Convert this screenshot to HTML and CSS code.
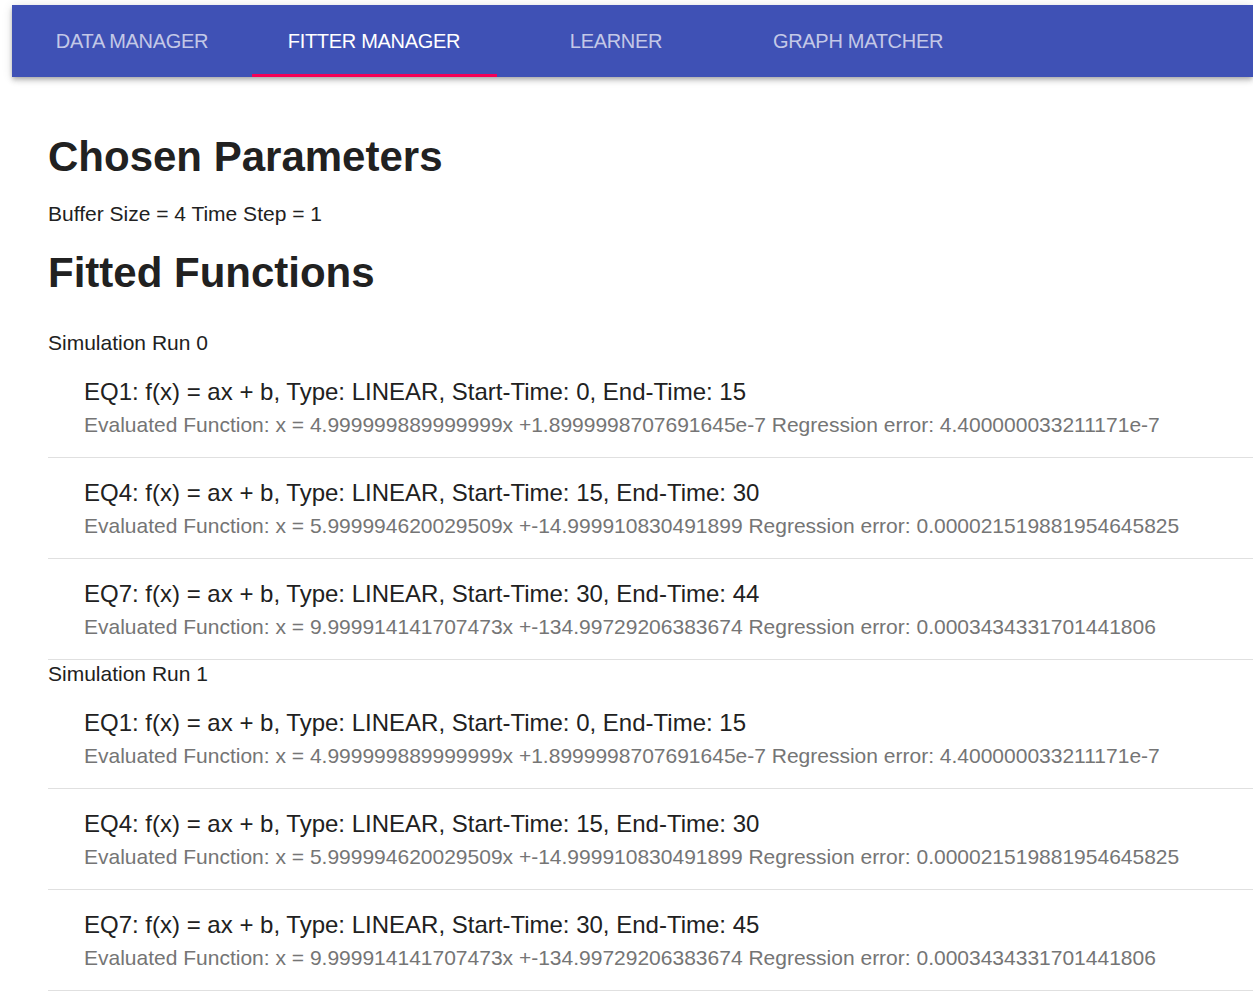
FILE: index.html
```html
<!DOCTYPE html>
<html>
<head>
<meta charset="utf-8">
<title>Fitter Manager</title>
<link rel="stylesheet" href="styles.css">
</head>
<body>
<header class="appbar">
  <nav class="tabs">
    <div class="tab">DATA MANAGER</div>
    <div class="tab tab-active">FITTER MANAGER</div>
    <div class="tab">LEARNER</div>
    <div class="tab">GRAPH MATCHER</div>
  </nav>
</header>
<main class="content">
  <h1 class="title title-first">Chosen Parameters</h1>
  <p class="params">Buffer Size = 4 Time Step = 1</p>
  <h1 class="title title-second">Fitted Functions</h1>

  <section class="run">
    <div class="run-label">Simulation Run 0</div>
    <ul class="list">
      <li class="item">
        <div class="primary">EQ1: f(x) = ax + b, Type: LINEAR, Start-Time: 0, End-Time: 15</div>
        <div class="secondary">Evaluated Function: x = 4.999999889999999x +1.8999998707691645e-7 Regression error: 4.400000033211171e-7</div>
      </li>
      <li class="item">
        <div class="primary">EQ4: f(x) = ax + b, Type: LINEAR, Start-Time: 15, End-Time: 30</div>
        <div class="secondary">Evaluated Function: x = 5.999994620029509x +-14.999910830491899 Regression error: 0.000021519881954645825</div>
      </li>
      <li class="item">
        <div class="primary">EQ7: f(x) = ax + b, Type: LINEAR, Start-Time: 30, End-Time: 44</div>
        <div class="secondary">Evaluated Function: x = 9.999914141707473x +-134.99729206383674 Regression error: 0.0003434331701441806</div>
      </li>
    </ul>
  </section>

  <section class="run">
    <div class="run-label">Simulation Run 1</div>
    <ul class="list">
      <li class="item">
        <div class="primary">EQ1: f(x) = ax + b, Type: LINEAR, Start-Time: 0, End-Time: 15</div>
        <div class="secondary">Evaluated Function: x = 4.999999889999999x +1.8999998707691645e-7 Regression error: 4.400000033211171e-7</div>
      </li>
      <li class="item">
        <div class="primary">EQ4: f(x) = ax + b, Type: LINEAR, Start-Time: 15, End-Time: 30</div>
        <div class="secondary">Evaluated Function: x = 5.999994620029509x +-14.999910830491899 Regression error: 0.000021519881954645825</div>
      </li>
      <li class="item">
        <div class="primary">EQ7: f(x) = ax + b, Type: LINEAR, Start-Time: 30, End-Time: 45</div>
        <div class="secondary">Evaluated Function: x = 9.999914141707473x +-134.99729206383674 Regression error: 0.0003434331701441806</div>
      </li>
    </ul>
  </section>
</main>
</body>
</html>
```
FILE: styles.css
```css
html, body {
  margin: 0;
  padding: 0;
  background: #ffffff;
}

body {
  font-family: "Liberation Sans", Arial, sans-serif;
  color: #212121;
  overflow: hidden;
}

.appbar {
  margin: 5px 0 0 12px;
  height: 72px;
  background: #3f51b5;
  box-shadow: 0 2px 4px -1px rgba(0,0,0,0.2), 0 4px 5px 0 rgba(0,0,0,0.14), 0 1px 10px 0 rgba(0,0,0,0.12);
}

.tabs {
  display: flex;
  height: 100%;
}

.tab {
  position: relative;
  width: 242px;
  display: flex;
  align-items: center;
  justify-content: center;
  font-size: 20px;
  letter-spacing: -0.3px;
  color: rgba(255,255,255,0.7);
  padding: 1px 2px 0 0;
  box-sizing: border-box;
}

.tab-active {
  color: #ffffff;
}

.tab-active::after {
  content: "";
  position: absolute;
  left: -2px;
  right: -1px;
  bottom: 0;
  height: 3px;
  background: #f50057;
}

.content {
  padding-left: 48px;
}

.title {
  margin: 0;
  font-size: 42px;
  line-height: 48px;
  font-weight: bold;
  color: #212121;
}

.title-first {
  margin-top: 56px;
}

.title-second {
  margin-top: 23px;
}

.params {
  margin: 21px 0 0;
  font-size: 21px;
  line-height: 24px;
  color: #212121;
}

.run-label {
  font-size: 21px;
  line-height: 28px;
  color: #212121;
}

.run:first-of-type {
  margin-top: 32px;
}

.list {
  list-style: none;
  margin: 0;
  padding: 0;
}

.item {
  padding: 19px 0 15px 36px;
  border-bottom: 1px solid #e0e0e0;
  white-space: nowrap;
}

.primary {
  font-size: 24px;
  line-height: 32px;
  color: #212121;
}

.secondary {
  font-size: 21px;
  line-height: 34px;
  color: #757575;
}
```
